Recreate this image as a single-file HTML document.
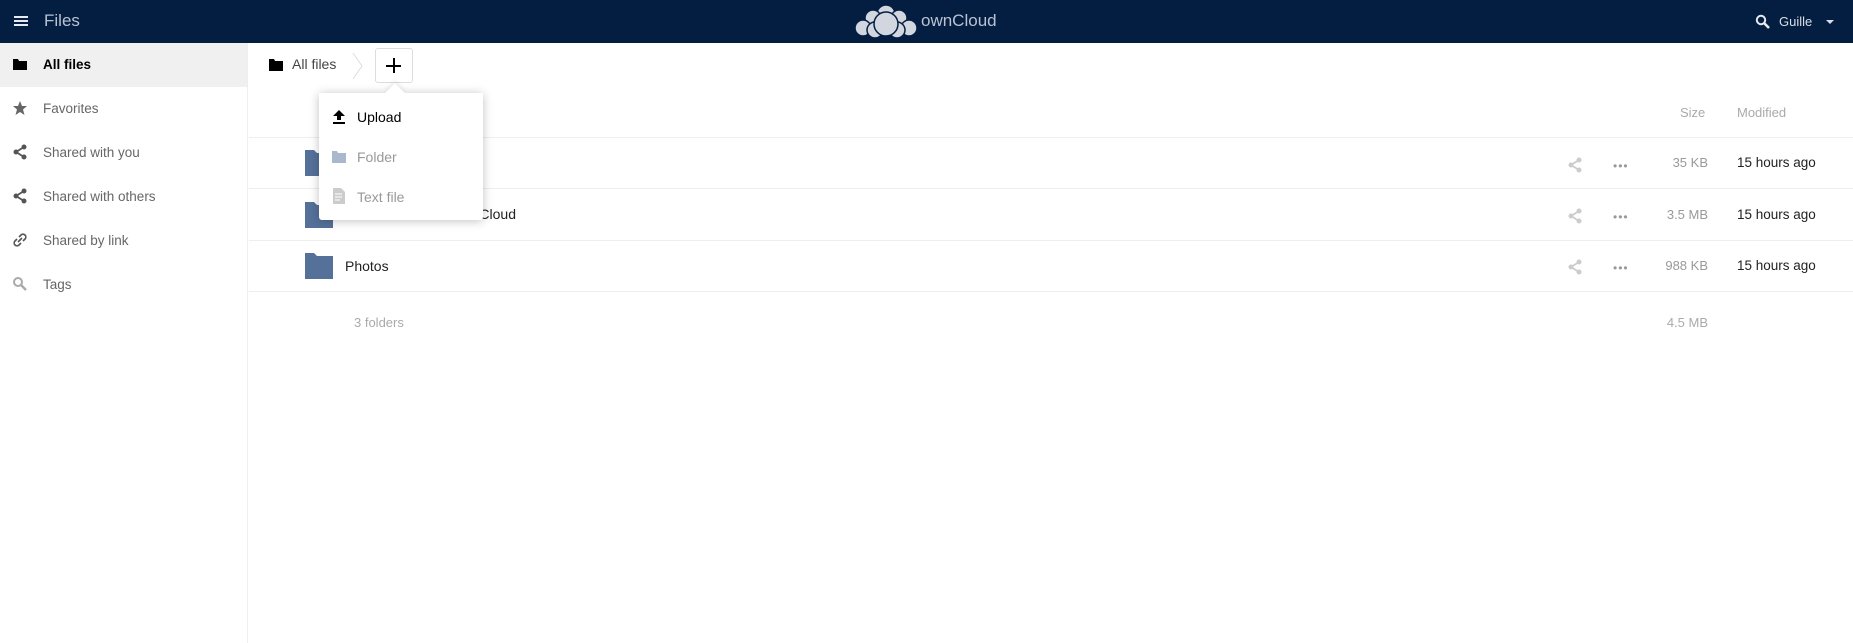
<!DOCTYPE html>
<html><head><meta charset="utf-8"><style>
*{box-sizing:border-box;margin:0;padding:0}
body{width:1853px;height:643px;overflow:hidden;background:#fff;font-family:"Liberation Sans",sans-serif;font-size:14px;color:#222;position:relative}
.abs{position:absolute}
#hdr{left:0;top:0;width:1853px;height:43px;background:#041e42}
#side{left:0;top:43px;width:248px;height:600px;border-right:1px solid #eee}
.nav{position:absolute;left:0;width:247px;height:44px;color:#666;font-size:13.5px}
.nav span{position:absolute;left:43px;top:14px}
.nav svg{position:absolute;left:12px;top:13px}
.row{position:absolute;left:249px;width:1604px;border-bottom:1px solid #eee}
.gray{color:#999}
</style></head><body>
<div id="hdr" class="abs">
  <div class="abs" style="left:14px;top:16px;width:14px;height:2px;background:#e6e9ee"></div>
  <div class="abs" style="left:14px;top:20px;width:14px;height:2px;background:#e6e9ee"></div>
  <div class="abs" style="left:14px;top:24px;width:14px;height:2px;background:#e6e9ee"></div>
  <div class="abs" style="left:44px;top:11px;font-size:17px;color:#b8c2d2">Files</div>
  <svg class="abs" style="left:853px;top:4px" width="66" height="36" viewBox="0 0 66 36">
    <g fill="#d2d7df" stroke="#041e42" stroke-width="1.5">
      <circle cx="33" cy="10" r="9"/><circle cx="20" cy="14" r="8"/><circle cx="46" cy="14" r="8"/>
      <circle cx="10" cy="24" r="8"/><circle cx="56" cy="24" r="8"/><circle cx="22" cy="26" r="8"/><circle cx="44" cy="26" r="8"/>
      <circle cx="33" cy="20" r="12"/>
    </g>
  </svg>
  <div class="abs" style="left:921px;top:11px;font-size:17px;color:#b8c2d2">ownCloud</div>
  <svg class="abs" style="left:1755px;top:14px" width="16" height="16" viewBox="0 0 16 16"><circle cx="6" cy="6" r="4.2" fill="none" stroke="#e6e9ee" stroke-width="2"/><path d="M9 9l5 5" stroke="#e6e9ee" stroke-width="2.6"/></svg>
  <div class="abs" style="left:1779px;top:14px;font-size:13px;color:#d8dde5">Guille</div>
  <div class="abs" style="left:1826px;top:20px;width:0;height:0;border-left:4px solid transparent;border-right:4px solid transparent;border-top:4px solid #d8dde5"></div>
</div>
<div id="side" class="abs">
  <div class="nav" style="top:0;background:#f0f0f0;color:#000;font-weight:bold"><svg width="16" height="16"><path d="M1 3h5l1 2h8v9H1z" fill="#000"/></svg><span>All files</span></div>
  <div class="nav" style="top:44px"><svg width="16" height="16"><path d="M8 1l2 5h5l-4 3.5 1.5 5.5L8 12l-4.5 3L5 9.5 1 6h5z" fill="#666"/></svg><span>Favorites</span></div>
  <div class="nav" style="top:88px"><svg width="16" height="16"><g fill="#555"><circle cx="12" cy="3" r="2.5"/><circle cx="4" cy="8" r="2.5"/><circle cx="12" cy="13" r="2.5"/></g><path d="M12 3L4 8l8 5" stroke="#555" stroke-width="1.8" fill="none"/></svg><span>Shared with you</span></div>
  <div class="nav" style="top:132px"><svg width="16" height="16"><g fill="#555"><circle cx="12" cy="3" r="2.5"/><circle cx="4" cy="8" r="2.5"/><circle cx="12" cy="13" r="2.5"/></g><path d="M12 3L4 8l8 5" stroke="#555" stroke-width="1.8" fill="none"/></svg><span>Shared with others</span></div>
  <div class="nav" style="top:176px"><svg width="16" height="16"><path d="M7 5l2-2a2.5 2.5 0 014 4l-2 2M9 11l-2 2a2.5 2.5 0 01-4-4l2-2M6 10l4-4" stroke="#555" stroke-width="1.6" fill="none"/></svg><span>Shared by link</span></div>
  <div class="nav" style="top:220px"><svg width="16" height="16"><circle cx="6" cy="6" r="4" fill="none" stroke="#aaa" stroke-width="2"/><path d="M9 9l5 5" stroke="#aaa" stroke-width="2.5"/></svg><span>Tags</span></div>
</div>
<svg class="abs" style="left:268px;top:57px" width="16" height="16"><path d="M1 2h5l1 2h8v10H1z" fill="#000"/></svg>
<div class="abs" style="left:292px;top:56px;font-size:14px;color:#444">All files</div>
<svg class="abs" style="left:351px;top:52px" width="14" height="28"><path d="M2 1l9 13-9 13" stroke="#ddd" fill="none"/></svg>
<div class="abs" style="left:375px;top:48px;width:38px;height:35px;border:1px solid #ddd;border-radius:3px"></div>
<div class="abs" style="left:386px;top:65px;width:15px;height:2px;background:#000"></div>
<div class="abs" style="left:392.5px;top:58px;width:2px;height:15px;background:#000"></div>
<div class="row" style="top:92px;height:46px"></div>
<div class="abs gray" style="left:1680px;top:105px;font-size:13px;color:#aaa">Size</div>
<div class="abs" style="left:1737px;top:105px;font-size:13px;color:#aaa">Modified</div>
<div class="row" style="top:138px;height:51px"></div>
<div class="row" style="top:189px;height:52px"></div>
<div class="row" style="top:241px;height:51px"></div>
<svg class="abs" style="left:305px;top:150px" width="28" height="26"><path d="M0 0h9l3 3h16v23H0z" fill="#55719a"/></svg>
<svg class="abs" style="left:305px;top:202px" width="28" height="26"><path d="M0 0h9l3 3h16v23H0z" fill="#55719a"/></svg>
<svg class="abs" style="left:305px;top:253px" width="28" height="26"><path d="M0 0h9l3 3h16v23H0z" fill="#55719a"/></svg>
<div class="abs" style="left:316px;width:200px;text-align:right;top:206px;font-size:14px;white-space:nowrap">Documents ownCloud</div>
<div class="abs" style="left:345px;top:258px;font-size:14px">Photos</div>
<div class="abs" style="left:1560px;top:156px;width:100px;height:120px">
<svg class="abs" style="left:7px;top:1px" width="16" height="16"><g fill="#ccc"><circle cx="12" cy="3" r="2.5"/><circle cx="4" cy="8" r="2.5"/><circle cx="12" cy="13" r="2.5"/></g><path d="M12 3L4 8l8 5" stroke="#ccc" stroke-width="1.8" fill="none"/></svg>
<svg class="abs" style="left:7px;top:52px" width="16" height="16"><g fill="#ccc"><circle cx="12" cy="3" r="2.5"/><circle cx="4" cy="8" r="2.5"/><circle cx="12" cy="13" r="2.5"/></g><path d="M12 3L4 8l8 5" stroke="#ccc" stroke-width="1.8" fill="none"/></svg>
<svg class="abs" style="left:7px;top:103px" width="16" height="16"><g fill="#ccc"><circle cx="12" cy="3" r="2.5"/><circle cx="4" cy="8" r="2.5"/><circle cx="12" cy="13" r="2.5"/></g><path d="M12 3L4 8l8 5" stroke="#ccc" stroke-width="1.8" fill="none"/></svg>
<div class="abs" style="left:53px;top:3px;font-size:12px;color:#999;letter-spacing:1px">•••</div>
<div class="abs" style="left:53px;top:54px;font-size:12px;color:#999;letter-spacing:1px">•••</div>
<div class="abs" style="left:53px;top:105px;font-size:12px;color:#999;letter-spacing:1px">•••</div>
</div>
<div class="abs" style="left:1600px;width:108px;text-align:right;top:155px;font-size:13px;color:#999">35 KB</div>
<div class="abs" style="left:1600px;width:108px;text-align:right;top:207px;font-size:13px;color:#999">3.5 MB</div>
<div class="abs" style="left:1600px;width:108px;text-align:right;top:258px;font-size:13px;color:#999">988 KB</div>
<div class="abs" style="left:1600px;width:108px;text-align:right;top:315px;font-size:13px;color:#aaa">4.5 MB</div>
<div class="abs" style="left:1737px;top:155px;font-size:13.5px">15 hours ago</div>
<div class="abs" style="left:1737px;top:207px;font-size:13.5px">15 hours ago</div>
<div class="abs" style="left:1737px;top:258px;font-size:13.5px">15 hours ago</div>
<div class="abs" style="left:354px;top:315px;font-size:13px;color:#aaa">3 folders</div>
<div class="abs" style="left:319px;top:93px;width:164px;height:127px;background:#fff;border-radius:3px;box-shadow:0 1px 10px rgba(0,0,0,.25)"></div>
<div class="abs" style="left:388px;top:86px;width:14px;height:14px;background:#fff;transform:rotate(45deg);box-shadow:-2px -2px 4px rgba(0,0,0,.08)"></div>
<div class="abs" style="left:319px;top:93px;width:164px;height:14px;background:#fff"></div>
<svg class="abs" style="left:332px;top:109px" width="14" height="16"><path d="M7 1l6 6H9v4H5V7H1z M1 13h12v2H1z" fill="#000"/></svg>
<div class="abs" style="left:357px;top:109px;font-size:14px;color:#000">Upload</div>
<svg class="abs" style="left:332px;top:150px" width="14" height="14"><path d="M0 1h5l1 2h8v10H0z" fill="#a9b8cc"/></svg>
<div class="abs" style="left:357px;top:149px;font-size:14px;color:#999">Folder</div>
<svg class="abs" style="left:333px;top:188px" width="12" height="16"><path d="M0 0h8l4 4v12H0z" fill="#ccc"/><path d="M2 6h7M2 9h7M2 12h5" stroke="#fff"/></svg>
<div class="abs" style="left:357px;top:189px;font-size:14px;color:#999">Text file</div>
</body></html>
